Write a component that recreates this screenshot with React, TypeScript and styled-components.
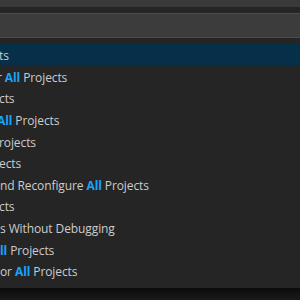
import React from 'react';
import styled, { createGlobalStyle } from 'styled-components';

const GlobalStyle = createGlobalStyle`
  html, body {
    margin: 0;
    padding: 0;
    background: #181818;
  }
  body {
    font-family: "Open Sans", "Noto Sans", sans-serif;
  }
`;

type Item = {
  parts: { text: string; hit?: boolean }[];
  cut: number;
  selected?: boolean;
};

const items: Item[] = [
  { parts: [{ text: 'ts' }], cut: -1, selected: true },
  { parts: [{ text: 'r ' }, { text: 'All', hit: true }, { text: ' Projects' }], cut: -3 },
  { parts: [{ text: 'cts' }], cut: -1 },
  { parts: [{ text: 'All', hit: true }, { text: ' Projects' }], cut: -3 },
  { parts: [{ text: 'rojects' }], cut: -1 },
  { parts: [{ text: 'ects' }], cut: -1 },
  { parts: [{ text: 'nd Reconfigure ' }, { text: 'All', hit: true }, { text: ' Projects' }], cut: 0 },
  { parts: [{ text: 'cts' }], cut: -1 },
  { parts: [{ text: 's Without Debugging' }], cut: 0 },
  { parts: [{ text: 'll', hit: true }, { text: ' Projects' }], cut: 0 },
  { parts: [{ text: 'or ' }, { text: 'All', hit: true }, { text: ' Projects' }], cut: 0 }
];

const App = () => {

  return (
    <Screen>
      <GlobalStyle />
      <TitleStrip />
      <QuickPick>
        <InputBox />
        <List>
          {items.map((item, index) => {

            return (
              <Row key={index} $selected={!!item.selected}>
                <Label $cut={item.cut}>
                  {item.parts.map((part, i) => {
                    return part.hit
                      ? <Hit key={i}>{part.text}</Hit>
                      : <span key={i}>{part.text}</span>;
                  })}
                </Label>
              </Row>
            );
          })}
        </List>
      </QuickPick>
      <Shadow />
    </Screen>
  );
};

export default App;

const Screen = styled.div`
  width: 300px;
  height: 300px;
  overflow: hidden;
  display: flex;
  flex-direction: column;
  background: #181818;
`;

const TitleStrip = styled.div`
  height: 7px;
  flex-shrink: 0;
  background: #3a3a3a;
`;

const QuickPick = styled.div`
  height: 281px;
  flex-shrink: 0;
  display: flex;
  flex-direction: column;
  padding-top: 6px;
  box-sizing: border-box;
  background: #252526;
`;

const InputBox = styled.div`
  height: 25px;
  flex-shrink: 0;
  box-sizing: border-box;
  background: #3c3c3c;
  border-top: 1px solid #1b5a8a;
  border-bottom: 1px solid #1b5a8a;
`;

const List = styled.div`
  margin-top: 6px;
  display: flex;
  flex-direction: column;
`;

const Row = styled.div<{ $selected: boolean }>`
  height: 21.6px;
  display: flex;
  align-items: center;
  overflow: hidden;
  white-space: nowrap;
  background: ${props => props.$selected ? '#062f4a' : 'transparent'};
  color: #cccccc;
  font-size: 12px;
  letter-spacing: -0.1px;
`;

const Label = styled.div<{ $cut: number }>`
  margin-left: ${props => props.$cut}px;
  padding-top: 2px;
`;

const Hit = styled.span`
  color: #18a3ff;
  font-weight: 700;
`;

const Shadow = styled.div`
  flex: 1;
  background: linear-gradient(#0b0b0b, #1a1a1a);
`;
